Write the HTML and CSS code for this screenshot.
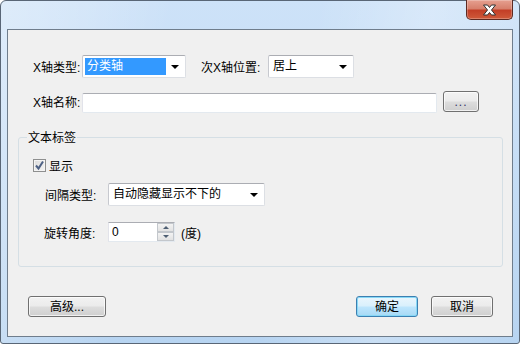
FILE: index.html
```html
<!DOCTYPE html>
<html lang="zh-CN">
  <head>
    <title>X轴设置</title>
    <meta charset="utf-8" />
    <link rel="stylesheet" href="styles.css">
  </head>
  <body>
    <div class="window">
      <div class="titlebar">
        <div class="close">
          <svg width="17" height="12" viewBox="0 0 17 12">
            <path d="M2.5 1h4l2 2.5 2-2.5h4l-4 5 4 5h-4l-2-2.5-2 2.5h-4l4-5z" fill="#fff" stroke="#303030" stroke-width="1" stroke-linejoin="round"/>
          </svg>
        </div>
      </div>

      <div class="client">
        <div class="row row-type">
          <span class="label w49">X轴类型:</span>
          <div class="combo w104">
            <span class="value selected">分类轴</span>
            <span class="arrow"></span>
          </div>
          <span class="label w67 gap15">次X轴位置:</span>
          <div class="combo w86">
            <span class="value">居上</span>
            <span class="arrow"></span>
          </div>
        </div>

        <div class="row row-name">
          <span class="label w49">X轴名称:</span>
          <div class="textbox"></div>
          <div class="button btn-browse">...</div>
        </div>

        <div class="group">
          <div class="legend">文本标签</div>

          <div class="check-row">
            <span class="checkbox">
              <svg width="11" height="11" viewBox="0 0 11 11">
                <path d="M2 5.5l2.5 3L9 1.5" fill="none" stroke="#4d6185" stroke-width="2"/>
              </svg>
            </span>
            <span>显示</span>
          </div>

          <div class="row row-interval">
            <span class="label w63">间隔类型:</span>
            <div class="combo w157">
              <span class="value">自动隐藏显示不下的</span>
              <span class="arrow"></span>
            </div>
          </div>

          <div class="row row-rotate">
            <span class="label w64">旋转角度:</span>
            <div class="spinner">
              <span class="spin-value">0</span>
              <div class="spin-buttons">
                <span class="spin up"></span>
                <span class="spin down"></span>
              </div>
            </div>
            <span class="unit">(度)</span>
          </div>
        </div>

        <div class="footer">
          <div class="button btn-advanced">高级...</div>
          <div class="footer-right">
            <div class="button btn-default">确定</div>
            <div class="button">取消</div>
          </div>
        </div>
      </div>
    </div>
  </body>
</html>
```

FILE: styles.css
```css
html, body {
  margin: 0;
  padding: 0;
}
body {
  background: #ffffff;
  font-family: "Liberation Sans", "Noto Sans CJK SC", sans-serif;
  font-size: 12px;
  color: #000000;
}

.window {
  box-sizing: border-box;
  width: 520px;
  height: 344px;
  border: 1px solid #596676;
  border-radius: 6px 6px 3px 3px;
  padding: 0 6px 6px 6px;
  display: flex;
  flex-direction: column;
  background:
    linear-gradient(100deg, rgba(255,255,255,0.35) 0%, rgba(255,255,255,0) 30%, rgba(255,255,255,0) 55%, rgba(255,255,255,0.25) 75%, rgba(255,255,255,0) 100%),
    linear-gradient(180deg, #cde2f8 0%, #b7d4f1 100%);
}

.titlebar {
  height: 28px;
  display: flex;
  justify-content: flex-end;
  flex-shrink: 0;
}

.close {
  box-sizing: border-box;
  width: 47px;
  height: 20px;
  margin-top: -1px;
  border: 1px solid #5d2a22;
  border-top: none;
  border-radius: 0 0 5px 5px;
  background: linear-gradient(180deg, #e6a090 0%, #d7806c 45%, #c33f27 55%, #cf5a3a 100%);
  display: flex;
  align-items: center;
  justify-content: center;
  box-shadow: inset 0 0 0 1px rgba(255,255,255,0.25);
}

.client {
  box-sizing: border-box;
  height: 309px;
  border: 1px solid #6f7d8c;
  background: #f0f0f0;
  padding: 0 9px 0 10px;
}

.row {
  display: flex;
  align-items: center;
}
.row-type {
  margin-top: 25px;
  padding-left: 15px;
  height: 23px;
}
.row-name {
  margin-top: 13px;
  padding-left: 15px;
  align-items: flex-start;
}
.row-name .label {
  line-height: 24px;
}

.label {
  white-space: nowrap;
  flex-shrink: 0;
}
.w49 { width: 49px; }
.w63 { width: 63px; }
.w64 { width: 64px; }
.w67 { width: 67px; }
.gap15 { margin-left: 15px; }

.combo {
  box-sizing: border-box;
  height: 23px;
  background: #ffffff;
  border: 1px solid #dcdfe4;
  border-top-color: #abadb3;
  border-left-color: #c7c9cf;
  border-radius: 2px;
  display: flex;
  align-items: center;
  padding: 2px;
  flex-shrink: 0;
}
.w104 { width: 104px; }
.w86 { width: 86px; }
.w157 { width: 157px; }

.value {
  flex: 1;
  height: 17px;
  line-height: 17px;
  padding-left: 2px;
  white-space: nowrap;
}
.value.selected {
  flex: 0 0 79px;
  background: #3399ff;
  color: #ffffff;
}

.arrow {
  width: 0;
  height: 0;
  border-left: 4px solid transparent;
  border-right: 4px solid transparent;
  border-top: 4px solid #000000;
  margin: 1px 4px 0 auto;
}

.textbox {
  box-sizing: border-box;
  width: 355px;
  height: 20px;
  margin-top: 2px;
  background: #ffffff;
  border: 1px solid #e3e9ef;
  border-top-color: #abadb3;
  border-left-color: #e2e3ea;
  border-radius: 2px;
}

.button {
  box-sizing: border-box;
  width: 62px;
  height: 21px;
  border: 1px solid #707070;
  border-radius: 3px;
  background: linear-gradient(180deg, #f2f2f2 0%, #ebebeb 48%, #dddddd 52%, #cfcfcf 100%);
  box-shadow: inset 0 0 0 1px rgba(255,255,255,0.7);
  display: flex;
  align-items: center;
  justify-content: center;
  line-height: 14px;
}
.btn-browse {
  width: 36px;
  margin-left: 6px;
  color: #333366;
  letter-spacing: 1px;
}
.btn-advanced {
  width: 78px;
}
.btn-default {
  border-color: #3c7fb1;
  background: linear-gradient(180deg, #eaf6fd 0%, #d9f0fc 48%, #bee6fd 52%, #a7d9f5 100%);
  box-shadow: inset 0 0 0 1px #87d8f6;
}

.group {
  box-sizing: border-box;
  margin-top: 22px;
  height: 130px;
  border: 1px solid #d5dfe5;
  border-radius: 3px;
}
.legend {
  width: fit-content;
  margin: -8px 0 0 8px;
  padding: 0 1px;
  line-height: 16px;
  background: #f0f0f0;
}

.check-row {
  display: flex;
  align-items: center;
  margin-top: 13px;
  padding-left: 14px;
  height: 13px;
  gap: 3px;
}
.checkbox {
  box-sizing: border-box;
  width: 13px;
  height: 13px;
  border: 1px solid #8e8f8f;
  background: linear-gradient(135deg, #dcdcdc 0%, #f4f4f4 100%);
  box-shadow: inset 0 0 0 1px #f4f4f4;
  display: flex;
  align-items: center;
  justify-content: center;
}

.row-interval {
  margin-top: 11px;
  padding-left: 26px;
}
.row-rotate {
  margin-top: 16px;
  padding-left: 25px;
}

.spinner {
  box-sizing: border-box;
  width: 67px;
  height: 20px;
  background: #ffffff;
  border: 1px solid #e3e9ef;
  border-top-color: #abadb3;
  border-left-color: #e2e3ea;
  display: flex;
}
.spin-value {
  flex: 1;
  padding-left: 3px;
  line-height: 18px;
}
.spin-buttons {
  width: 17px;
  display: flex;
  flex-direction: column;
}
.spin {
  flex: 1;
  box-sizing: border-box;
  border: 1px solid #c3c7cc;
  background: linear-gradient(180deg, #f3f3f3 0%, #e2e2e2 100%);
  display: flex;
  align-items: center;
  justify-content: center;
}
.spin::after {
  content: "";
  width: 0;
  height: 0;
  border-left: 3px solid transparent;
  border-right: 3px solid transparent;
}
.spin.up::after {
  border-bottom: 3px solid #4e5f73;
}
.spin.down::after {
  border-top: 3px solid #4e5f73;
}
.unit {
  margin-left: 6px;
}

.footer {
  display: flex;
  justify-content: space-between;
  margin-top: 29px;
  padding: 0 10px;
}
.footer-right {
  display: flex;
  gap: 13px;
}
```
